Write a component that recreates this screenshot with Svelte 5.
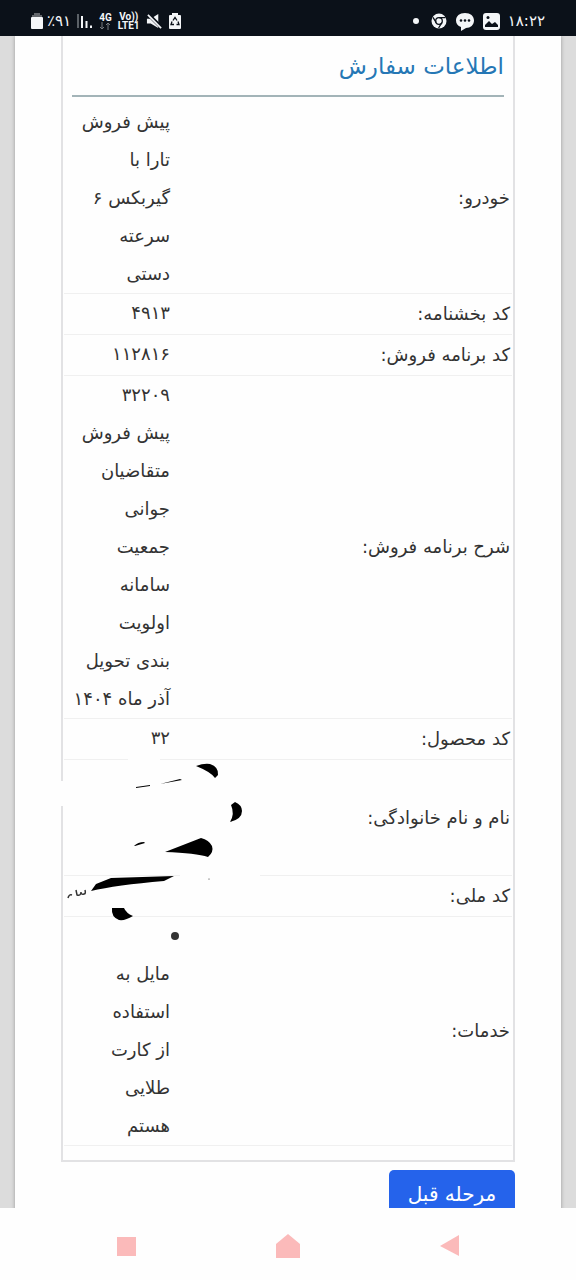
<script>
  const rows = [
    { label: 'خودرو:', value: 'پیش فروش\nتارا با\nگیربکس ۶\nسرعته\nدستی' },
    { label: 'کد بخشنامه:', value: '۴۹۱۳' },
    { label: 'کد برنامه فروش:', value: '۱۱۲۸۱۶' },
    {
      label: 'شرح برنامه فروش:',
      value: '۳۲۲۰۹\nپیش فروش\nمتقاضیان\nجوانی\nجمعیت\nسامانه\nاولویت\nبندی تحویل\nآذر ماه ۱۴۰۴'
    },
    { label: 'کد محصول:', value: '۳۲' },
    { label: 'نام و نام خانوادگی:', value: '', hidden: true },
    { label: 'کد ملی:', value: '' },
    { label: 'خدمات:', services: ['مایل به\nاستفاده\nاز کارت\nطلایی\nهستم'] }
  ];
</script>

<div class="phone">
  <header class="status-bar">
    <div class="status-group left">
      <svg width="12" height="18" viewBox="0 0 12 18">
        <path d="M3 1h6v2h2v3H1V3h2z" fill="#62666b" />
        <rect x="0" y="5" width="12" height="12" rx="1" fill="#f4f6f8" />
      </svg>
      <span class="battery">٪۹۱</span>
      <svg width="16" height="16" viewBox="0 0 16 16">
        <path d="M1 1v14" stroke="#777c82" stroke-width="1.5" />
        <path d="M5 3v12M9.500 8v7M14 12.500v2.500" stroke="#f4f6f8" stroke-width="2" />
      </svg>
      <span class="network">
        <b>4G</b>
        <svg width="12" height="8" viewBox="0 0 12 8" fill="none" stroke="#777c82">
          <path d="M3 0v7M1 5l2 2 2-2M9 8V1M7 3l2-2 2 2" />
        </svg>
      </span>
      <span class="network"><b>Vo))</b><b>LTE1</b></span>
      <svg width="17" height="17" viewBox="0 0 18 18">
        <path d="M1 6h4l8-5v15L5 11H1z" fill="#f4f6f8" />
        <path d="M2 1l15 15" stroke="#0b1119" stroke-width="4" />
        <path d="M2 2l14 14" stroke="#f4f6f8" stroke-width="1.800" />
      </svg>
      <svg width="12" height="18" viewBox="0 0 12 18">
        <path d="M3 1h6v2h2q1 0 1 1v12q0 1-1 1H1q-1 0-1-1V4q0-1 1-1h2z" fill="#f4f6f8" />
        <path d="M4 8.500l2-3 2 3M9 9.500l1 3H7.500M5 12.500H2l1-3" fill="none" stroke="#0b1119" stroke-width="1.300" />
      </svg>
    </div>
    <div class="status-group">
      <span class="dot"></span>
      <svg width="16" height="16" viewBox="0 0 16 16">
        <circle cx="8" cy="8" r="7.500" fill="#f4f6f8" />
        <circle cx="8" cy="8" r="3.300" fill="#f4f6f8" stroke="#0b1119" stroke-width="1.300" />
        <path d="M8 4.700h6.500M5.200 9.600L2 4.400M10.800 9.600L7.600 15" stroke="#0b1119" stroke-width="1.300" />
      </svg>
      <svg width="20" height="19" viewBox="0 0 20 19">
        <path d="M10 1c5.500 0 9 3 9 7.500S15.500 16 11 16l-5 3v-4C2.800 14 1 11.500 1 8.500 1 4 4.500 1 10 1z" fill="#f4f6f8" />
        <g fill="#0b1119"><circle cx="6" cy="8.500" r="1.300" /><circle cx="10" cy="8.500" r="1.300" /><circle cx="14" cy="8.500" r="1.300" /></g>
      </svg>
      <svg width="17" height="17" viewBox="0 0 17 17">
        <rect width="17" height="17" rx="3" fill="#f4f6f8" />
        <path d="M2 14v-2l4-4 3 3 3-2 3 3v2z" fill="#0b1119" />
        <circle cx="5" cy="4.500" r="1.500" fill="#0b1119" />
      </svg>
      <span class="clock">۱۸:۲۲</span>
    </div>
  </header>

  <main dir="rtl">
    <div class="sheet">
      <section class="panel">
        <h1>اطلاعات سفارش</h1>
        <table>
          <tbody>
            {#each rows as row}
              <tr class:name-row={row.hidden}>
                <th scope="row">{row.label}</th>
                <td>
                  {#if row.services}
                    <ul>
                      {#each row.services as service}
                        <li><span class="bullet"></span><span class="service">{service}</span></li>
                      {/each}
                    </ul>
                  {:else}
                    {row.value}
                  {/if}
                  {#if row.hidden}
                    <svg class="scribble" width="200" height="164" viewBox="0 0 200 164">
                      <path d="M-6 21h8v25h-8zM64-2h32v5H64zM116 113h80v8h-80z" fill="#fefefe" />
                      <path d="M132 6q8-3 14-2 9 3 8 11l-3 3q-4-6-19-12z" />
                      <path d="M167 45l4-3q7 3 7 9 0 8-12 11 5-8 1-17z" />
                      <path d="M101 92l36-14q8 2 11 8 2 6-4 11-12-4-43-5z" />
                      <path d="M27 131l5-7 15-6 63-2-10 5q-48 4-73 10z" />
                      <path d="M48 148h12q2 5 9 8-8 5-14 4-8-3-7-12z" />
                      <path d="M96 24l20-5 2 1-22 4zM72 27l14-2v1l-14 2z" />
                      <path d="M70 86q4-4 10-4l1 1-10 3z" />
                      <path d="M4 138q1-4 4-3M12 130l1 5q4 1 4-3 0 3 3 2 2 0 1-4" fill="none" stroke="#333" stroke-width="1.500" />
                      <circle cx="145" cy="119" r="0.500" />
                    </svg>
                  {/if}
                </td>
              </tr>
            {/each}
          </tbody>
        </table>
      </section>
      <button class="previous" type="button">مرحله قبل</button>
    </div>
  </main>

  <nav class="nav-bar">
    <button type="button" aria-label="Recent apps">
      <svg width="24" height="26" viewBox="0 0 24 26"><path d="M2 4h19v19H2z" /></svg>
    </button>
    <button type="button" aria-label="Home">
      <svg width="24" height="26" viewBox="0 0 24 26"><path d="M12 1l12 10v14H0V11z" /></svg>
    </button>
    <button type="button" aria-label="Back">
      <svg width="24" height="26" viewBox="0 0 24 26"><path d="M3 13L22 2v21z" /></svg>
    </button>
  </nav>
</div>

<style>
  :global(body) {
    margin: 0;
  }

  .phone {
    display: flex;
    flex-direction: column;
    height: 100vh;
    overflow: hidden;
    font-family: "DejaVu Sans", sans-serif;
    color: #333;
    background: #fefefe;
  }

  .status-bar {
    display: flex;
    flex: none;
    justify-content: space-between;
    align-items: center;
    box-sizing: border-box;
    height: 36px;
    padding: 6px 31px 0;
    background: #0b1119;
    color: #f4f6f8;
  }

  .status-group {
    display: flex;
    align-items: center;
    gap: 8px;
  }

  .status-group.left {
    gap: 6px;
  }

  .battery,
  .clock {
    font-size: 15px;
    line-height: 20px;
  }

  .battery {
    margin-left: -2px;
  }

  .network {
    display: flex;
    flex-direction: column;
    align-items: center;
    font-family: Roboto, sans-serif;
    font-size: 10px;
    line-height: 9px;
  }

  .dot {
    width: 6px;
    height: 6px;
    margin-right: 4px;
    border-radius: 50%;
    background: #f4f6f8;
  }

  main {
    flex: 1;
    min-height: 0;
    overflow: hidden;
    padding: 0 15px;
    background: #dcdcdc;
  }

  .sheet {
    min-height: 100%;
    padding: 0 46px;
    background: #fefefe;
    box-shadow: 0 0 4px #999;
  }

  .panel {
    padding: 8px 1px 14px;
    border: 2px solid #e2e2e4;
    border-top: 0;
  }

  h1 {
    margin: 0 8px 6px;
    padding-bottom: 7px;
    border-bottom: 2px solid #a3b4b8;
    color: #2577b5;
    font-size: 23px;
    font-weight: normal;
    line-height: 44px;
  }

  table {
    width: 100%;
    border-collapse: collapse;
    font-size: 18px;
    line-height: 38px;
  }

  tr {
    height: 41px;
    border-bottom: 1px solid #f0f0f0;
  }

  .name-row {
    height: 116px;
  }

  th,
  td {
    padding: 0;
    font-weight: normal;
    text-align: right;
  }

  th {
    padding-right: 2px;
    vertical-align: middle;
  }

  td {
    position: relative;
    width: 106px;
    vertical-align: top;
    white-space: pre-line;
  }

  ul {
    margin: 0;
    padding: 0;
    list-style: none;
    white-space: normal;
  }

  li {
    display: flex;
    flex-direction: column;
    margin-right: -9px;
  }

  .bullet {
    width: 8px;
    height: 8px;
    margin: 15px 0;
    border-radius: 50%;
    background: #333;
  }

  .service {
    padding-right: 9px;
    white-space: pre-line;
  }

  /* pen marks that cover the customer's name and national code */
  .scribble {
    position: absolute;
    top: 0;
    left: 0;
    z-index: 1;
    overflow: visible;
  }

  .previous {
    display: block;
    width: 126px;
    height: 48px;
    margin-top: 8px;
    padding: 0;
    border: 0;
    border-radius: 5px;
    background: #2563eb;
    color: #fff;
    font-family: inherit;
    font-size: 20px;
    line-height: 46px;
  }

  .nav-bar {
    display: flex;
    flex: none;
    justify-content: space-around;
    height: 72px;
    padding: 0 46px;
    background: #fefefe;
  }

  .nav-bar button {
    padding: 0 12px;
    border: 0;
    background: none;
  }

  .nav-bar svg {
    display: block;
    margin-top: 4px;
    fill: #fbbaba;
  }
</style>
